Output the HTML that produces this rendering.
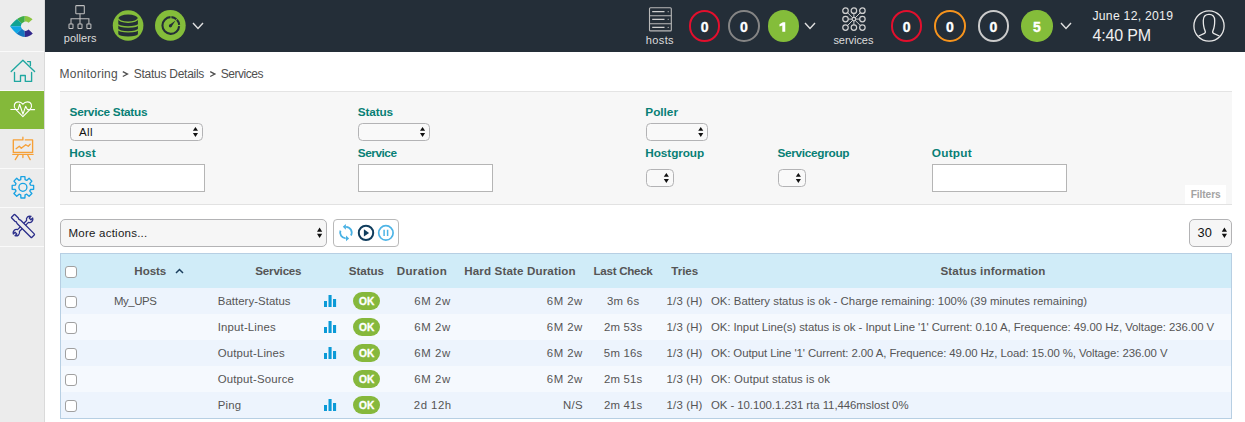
<!DOCTYPE html>
<html><head><meta charset="utf-8">
<style>
*{box-sizing:border-box;margin:0;padding:0}
html,body{width:1245px;height:422px;overflow:hidden;background:#fff;font-family:"Liberation Sans",sans-serif;}
.a{position:absolute;white-space:nowrap;line-height:1}
#side{position:absolute;left:0;top:0;width:45px;height:422px;background:#ececec;border-right:1px solid #dadada}
.sep{position:absolute;left:0;width:44px;height:1px;background:#fafafa}
#hdr{position:absolute;left:45px;top:0;width:1200px;height:52px;background:#242e38}
.ring{position:absolute;top:10.2px;width:31.6px;height:31.6px;border-radius:50%;border:2px solid #e30f2d;color:#fff;font-weight:bold;font-size:14px;-webkit-text-stroke:0.35px #fff;text-align:center;line-height:30px}
.fill{border:none;background:#84bd3a;line-height:34px}
.sel{position:absolute;border:1px solid #b3b3b5;border-radius:4.5px;background:#f9f9f9}
.inp{position:absolute;border:1px solid #b5b5b5;background:#fff;height:28px;width:135px}
.cb{position:absolute;width:12px;height:12px;border:1px solid #a0a0a0;border-radius:3px;background:#fff}
.ok{position:absolute;width:27px;height:18px;border-radius:9px;background:#86b83c}
.ok svg{position:absolute;left:0;top:0}
</style></head><body>

<!-- SIDEBAR -->
<div id="side">
  <svg class="a" style="left:0;top:0" width="44" height="52" viewBox="0 0 44 52">
    <defs><clipPath id="lc"><path d="M10,26.2 C14,21 19,16 25,15.9 C28,15.9 30.5,17.2 32.6,19.2 L28.6,22.8 A4.5,4.5 0 1 0 28.6,29.6 L32.8,33.5 C30.5,35.6 28,36.9 25,36.9 C19,36.9 14,31.8 10,26.2 Z"/></clipPath></defs>
    <g clip-path="url(#lc)">
      <polygon points="24.5,26.2 25,0 44,0 44,15" fill="#8cc540"/>
      <polygon points="24.5,26.2 25,0 0,0 12,14" fill="#3fad48"/>
      <polygon points="24.5,26.2 12,14 0,0 0,26.2" fill="#10a393"/>
      <polygon points="24.5,26.2 0,26.2 0,52 12,38" fill="#0ea6e4"/>
      <polygon points="24.5,26.2 12,38 0,52 25.5,52" fill="#1475bf"/>
      <polygon points="24.5,26.2 25.5,52 44,52 44,37" fill="#33298c"/>
    </g>
  </svg>
  <div class="sep" style="top:51px"></div>
  <div class="sep" style="top:90px"></div>
  <div class="a" style="left:0;top:91px;width:44px;height:38px;background:#84b93a"></div>
  <div class="sep" style="top:168px"></div>
  <div class="sep" style="top:207px"></div>
  <div class="sep" style="top:246px"></div>
  <svg class="a" style="left:0;top:0" width="44" height="260" viewBox="0 0 44 260" fill="none" stroke-linecap="round" stroke-linejoin="round">
  <g stroke="#1fa7a0" stroke-width="1.35">
    <path d="M11.2,71.5 L22.9,60.2 L34.6,71.5"/>
    <path d="M27.6,61.6 H30.4 V65.6"/>
    <path d="M14.5,72.5 V81.4 H20.5 V75.5 H25.3 V81.4 H31.6 V72.5"/>
  </g>
  <g stroke="#fff" stroke-width="1.1">
    <path d="M22.9,116.6 L15.7,109.4 C12.9,106.4 14.3,101.9 18.3,101.9 C20.5,101.9 22,103 22.9,104.3 C23.8,103 25.3,101.9 27.5,101.9 C31.5,101.9 32.9,106.4 30.1,109.4 Z"/>
    <path d="M10.8,109.5 H18.1 L19.6,104.2 L23,114.2 L25.6,106.3 L27.4,109.6 H34.6"/>
  </g>
  <g stroke="#f6a037" stroke-width="1.35">
    <path d="M22.9,137.2 V139.9 H21.3 M21.3,139.9 H13.3 V152.4 H32.6 V139.9 H25.3"/>
    <path d="M16.1,148.7 L19.3,146.3 L21.3,148.3 L25.7,144.7 L28.2,146.3 L30.2,144.3"/>
    <path d="M12.8,154.4 H33"/>
    <path d="M18.1,155.2 L15.3,159.6 M27.8,155.2 L30.2,159.6 M22.9,155.2 V157.6"/>
  </g>
  <g stroke="#1aa3e3" stroke-width="1.35">
    <path d="M20.72,179.71 L20.91,176.58 L24.89,176.58 L25.08,179.71 L26.73,180.39 L29.07,178.32 L31.88,181.13 L29.81,183.47 L30.49,185.12 L33.62,185.31 L33.62,189.29 L30.49,189.48 L29.81,191.13 L31.88,193.47 L29.07,196.28 L26.73,194.21 L25.08,194.89 L24.89,198.02 L20.91,198.02 L20.72,194.89 L19.07,194.21 L16.73,196.28 L13.92,193.47 L15.99,191.13 L15.31,189.48 L12.18,189.29 L12.18,185.31 L15.31,185.12 L15.99,183.47 L13.92,181.13 L16.73,178.32 L19.07,180.39 Z"/>
    <circle cx="22.9" cy="187.3" r="4"/>
  </g>
  <g stroke="#2b2e8a" stroke-width="1.3" transform="translate(23,226) rotate(45)">
    <path d="M1.3,-6.4 A3.4,3.4 0 0 0 1.2,-12.5 L1.2,-10 L-1.2,-10 L-1.2,-12.5 A3.4,3.4 0 0 0 -1.3,-6.4 V6.4 A3.4,3.4 0 0 0 -1.2,12.5 L-1.2,10 L1.2,10 L1.2,12.5 A3.4,3.4 0 0 0 1.3,6.4 Z"/>
    <path d="M-14.3,-1.9 Q-14.3,-2.4 -13.6,-2.4 L-9,-2.4 L-7.5,-1.8 L-6,-2.4 H13.5 Q14.3,-2.4 14.3,-1.6 V1.6 Q14.3,2.4 13.5,2.4 H-6 L-7.5,1.8 L-9,2.4 H-13.6 Q-14.3,2.4 -14.3,1.9 Z" fill="#ececec"/>
  </g>
</svg>
</div>

<!-- HEADER -->
<div id="hdr"></div>
<svg class="a" style="left:66px;top:4px" width="28" height="28" viewBox="0 0 28 28" fill="none" stroke="#bfbfbf" stroke-width="1.05">
  <rect x="9.8" y="1.6" width="8.5" height="8.2" rx="0.6"/>
  <path d="M14,9.8 V19.9 M5,19.9 V14.75 H22.9 V19.9"/>
  <rect x="3" y="20" width="4" height="4.4" rx="0.5"/><rect x="12" y="20" width="4" height="4.4" rx="0.5"/><rect x="20.9" y="20" width="4" height="4.4" rx="0.5"/>
</svg>
<svg class="a" style="left:112px;top:10px" width="32" height="32" viewBox="0 0 32 32">
  <circle cx="16.1" cy="15.5" r="15.3" fill="#84bd3a"/>
  <path d="M6.3,8.4 A9.8,3.9 0 0 1 25.9,8.4 V24 A9.8,2.6 0 0 1 6.3,24 Z" fill="#242e38"/>
  <g fill="none" stroke="#84bd3a" stroke-width="1.4">
    <path d="M6.3,8.4 A9.8,3.8 0 0 0 25.9,8.4"/>
    <path d="M6.3,14.4 A9.8,2.6 0 0 0 25.9,14.4"/>
    <path d="M6.3,19.3 A9.8,2.6 0 0 0 25.9,19.3"/>
  </g>
</svg>
<svg class="a" style="left:154px;top:10px" width="32" height="32" viewBox="0 0 32 32">
  <circle cx="16.35" cy="15.45" r="15.35" fill="#84bd3a"/>
  <g fill="none" stroke="#242e38" stroke-width="2.1">
    <path d="M25.13,16.08 A8.35,8.35 0 1 1 16.51,7.16"/>
    <path d="M17.38,7.17 A8.35,8.35 0 0 1 22.39,9.3"/>
    <path d="M22.91,9.81 A8.35,8.35 0 0 1 25.13,14.92"/>
  </g>
  <path d="M17.32,16.95 L21.5,10.4 L15.28,15.05 Z" fill="#242e38"/>
  <circle cx="16.3" cy="16" r="1.45" fill="#242e38"/>
</svg>
<svg class="a" style="left:192px;top:22px" width="12" height="8" viewBox="0 0 12 8" fill="none" stroke="#e0e0e0" stroke-width="1.4"><path d="M1,1 L6,6.5 L11,1"/></svg>

<svg class="a" style="left:648px;top:6px" width="26" height="27" viewBox="0 0 26 27" fill="none" stroke="#b9b9b9" stroke-width="1.1">
  <rect x="1.5" y="1.7" width="21.8" height="23.2" rx="1"/><path d="M1.5,9.7 H23.3 M1.5,17.8 H23.3"/>
  <path d="M4.2,5.7 H16.5 M4.2,13.3 H16.5 M4.2,21.4 H16.5" stroke="#cfcfcf" stroke-width="1.2"/>
  <circle cx="20.2" cy="5.7" r="0.6" fill="#bbb" stroke="none"/><circle cx="20.2" cy="13.3" r="0.6" fill="#bbb" stroke="none"/><circle cx="20.2" cy="21.4" r="0.6" fill="#bbb" stroke="none"/>
</svg>
<div class="ring" style="left:688.8px">0</div>
<div class="ring" style="left:728px;border-color:#858585">0</div>
<div class="ring fill" style="left:767.6px"></div>
<svg class="a" style="left:775px;top:18px" width="16" height="16" viewBox="0 0 16 16"><path d="M10.25,4.2 V13.65 H7.3 V7.5 L4.5,8.45 V6.15 L7.85,4.2 Z" fill="#fff"/></svg>
<svg class="a" style="left:804px;top:22px" width="12" height="8" viewBox="0 0 12 8" fill="none" stroke="#e0e0e0" stroke-width="1.4"><path d="M1,1 L6,6.5 L11,1"/></svg>

<svg class="a" style="left:840px;top:6px" width="28" height="28" viewBox="0 0 28 28" fill="none" stroke="#d0d0d0" stroke-width="1.2">
  <circle cx="5.5" cy="4.65" r="2.75"/><circle cx="13.9" cy="4.65" r="2.75"/><circle cx="22.4" cy="4.65" r="2.75"/><circle cx="5.5" cy="13.1" r="2.75"/><circle cx="13.9" cy="13.1" r="1.8"/><circle cx="22.4" cy="13.1" r="2.75"/><circle cx="5.5" cy="21.6" r="2.75"/><circle cx="13.9" cy="21.6" r="2.75"/><circle cx="22.4" cy="21.6" r="2.75"/>
  <path d="M12.63,11.82 L7.44,6.60 M13.90,11.30 L13.90,7.40 M15.18,11.83 L20.45,6.59 M12.10,13.10 L8.25,13.10 M15.70,13.10 L19.65,13.10 M12.63,14.38 L7.43,19.64 M13.90,14.90 L13.90,18.85 M15.17,14.37 L20.46,19.66" stroke-width="1"/>
</svg>
<div class="ring" style="left:890.8px">0</div>
<div class="ring" style="left:934.2px;border-color:#f7941d">0</div>
<div class="ring" style="left:977.5px;border-color:#cbcbcb">0</div>
<div class="ring fill" style="left:1021px">5</div>
<svg class="a" style="left:1060px;top:22px" width="12" height="8" viewBox="0 0 12 8" fill="none" stroke="#e0e0e0" stroke-width="1.4"><path d="M1,1 L6,6.5 L11,1"/></svg>

<svg class="a" style="left:1192px;top:9px" width="34" height="34" viewBox="0 0 34 34" fill="none" stroke="#e8e8e8" stroke-width="1.3">
  <circle cx="17" cy="17" r="15.1"/>
  <path d="M6.6,27 L12.5,24.4 C13.4,24 13.5,22.8 13,21.6 C12,19.5 11.3,16.5 11.3,11.5 C11.3,7.3 13.6,5.3 17,5.3 C20.4,5.3 22.7,7.3 22.7,11.5 C22.7,16.5 22,19.5 21,21.6 C20.5,22.8 20.6,24 21.5,24.4 L27.4,27"/>
</svg>

<svg class="a" style="left:0;top:60px" width="240" height="24" fill="none" stroke="#4f4f4f" stroke-width="1.3">
  <path d="M122.8,11.6 L127.5,14.05 L122.8,16.5 M210.2,11.6 L214.9,14.05 L210.2,16.5"/>
</svg>
<!-- FILTERS -->
<div class="a" style="left:60px;top:91px;width:1172px;height:114px;background:#f7f7f7;border-top:1px solid #e4e4e4;border-bottom:1px solid #e2e2e2"></div>
<div class="a" style="left:1185px;top:185px;width:41px;height:19px;background:#fff"></div>

<div class="sel" style="left:70px;top:123px;width:133px;height:18px"></div>
<div class="inp" style="left:70px;top:164px"></div>
<div class="sel" style="left:358px;top:123px;width:72px;height:18px"></div>
<div class="inp" style="left:358px;top:164px"></div>
<div class="sel" style="left:646px;top:123px;width:62px;height:18px"></div>
<div class="sel" style="left:646px;top:169px;width:28px;height:18px"></div>
<div class="sel" style="left:778px;top:169px;width:28px;height:18px"></div>
<div class="inp" style="left:932px;top:164px"></div>

<!-- ACTIONS -->
<div class="sel" style="left:60px;top:219px;width:267px;height:28px;background:#f6f6f6;border-radius:5px"></div>
<div class="a" style="left:333px;top:219px;width:66px;height:28px;border:1px solid #b9b9b9;border-radius:4px;background:#fff"></div>
<svg class="a" style="left:333px;top:219px" width="66" height="28" viewBox="0 0 66 28">
  <g fill="none" stroke="#48b1e4" stroke-width="1.8">
    <path d="M17.92,16.50 A5.8,5.8 0 0 0 13.10,7.80"/>
    <path d="M7.45,11.62 A5.8,5.8 0 0 0 12.70,19.40"/>
  </g>
  <path d="M9.8,7.8 L12.9,4.9 L12.9,10.7 Z" fill="#48b1e4"/>
  <path d="M16.1,19.4 L13,16.5 L13,22.3 Z" fill="#48b1e4"/>
  <circle cx="33" cy="13.9" r="7.2" fill="none" stroke="#103d5d" stroke-width="2"/>
  <path d="M30.9,10.3 L36.1,13.9 L30.9,17.5 Z" fill="#103d5d"/>
  <circle cx="52.9" cy="13.9" r="7.2" fill="none" stroke="#4db4e6" stroke-width="1.7"/>
  <path d="M51.1,10.7 V17.1 M54.6,10.7 V17.1" stroke="#4db4e6" stroke-width="1.5"/>
</svg>
<div class="sel" style="left:1189px;top:219px;width:43px;height:28px;background:#f6f6f6;border-radius:5px"></div>

<!-- select arrows -->
<svg class="a" style="left:0;top:0" width="1245" height="260" fill="#111">
  <g transform="translate(192.9,127)"><path d="M0,3.8 L2.55,0 L5.1,3.8 Z M0,6 L5.1,6 L2.55,10 Z"/></g>
  <g transform="translate(420,127)"><path d="M0,3.8 L2.55,0 L5.1,3.8 Z M0,6 L5.1,6 L2.55,10 Z"/></g>
  <g transform="translate(698.2,127)"><path d="M0,3.8 L2.55,0 L5.1,3.8 Z M0,6 L5.1,6 L2.55,10 Z"/></g>
  <g transform="translate(663.8,173)"><path d="M0,3.8 L2.55,0 L5.1,3.8 Z M0,6 L5.1,6 L2.55,10 Z"/></g>
  <g transform="translate(795.8,173)"><path d="M0,3.8 L2.55,0 L5.1,3.8 Z M0,6 L5.1,6 L2.55,10 Z"/></g>
  <g transform="translate(317,227.6)"><path d="M0,4.2 L2.6,0 L5.2,4.2 Z M0,6.2 L5.2,6.2 L2.6,10.4 Z"/></g>
  <g transform="translate(1221.8,227.6)"><path d="M0,4.2 L2.6,0 L5.2,4.2 Z M0,6.2 L5.2,6.2 L2.6,10.4 Z"/></g>
</svg>

<!-- TABLE -->
<div class="a" style="left:60px;top:253px;width:1172px;height:166px;border:1px solid #b7cfe3;background:#f5f9fe"></div>
<div class="a" style="left:61px;top:254px;width:1170px;height:34px;background:#d0ecf8"></div>
<div class="a" style="left:61px;top:288px;width:1170px;height:26px;background:#edf4fd"></div>
<div class="cb" style="left:65px;top:296px"></div>
<svg class="a" style="left:324px;top:295px" width="13" height="12" viewBox="0 0 13 12" fill="#0b9ad7"><rect x="0" y="6" width="3" height="6"/><rect x="4.5" y="0" width="3.1" height="12"/><rect x="9" y="4" width="3.1" height="8"/></svg>
<div class="ok" style="left:353px;top:292px"><svg width="27" height="18"><text x="13.6" y="13" text-anchor="middle" fill="#fff" font-family="Liberation Sans" font-weight="bold" font-size="10.2" stroke="#fff" stroke-width="0.35">OK</text></svg></div>
<div class="a" style="left:61px;top:314px;width:1170px;height:26px;background:#f5f9fe"></div>
<div class="cb" style="left:65px;top:322px"></div>
<svg class="a" style="left:324px;top:321px" width="13" height="12" viewBox="0 0 13 12" fill="#0b9ad7"><rect x="0" y="6" width="3" height="6"/><rect x="4.5" y="0" width="3.1" height="12"/><rect x="9" y="4" width="3.1" height="8"/></svg>
<div class="ok" style="left:353px;top:318px"><svg width="27" height="18"><text x="13.6" y="13" text-anchor="middle" fill="#fff" font-family="Liberation Sans" font-weight="bold" font-size="10.2" stroke="#fff" stroke-width="0.35">OK</text></svg></div>
<div class="a" style="left:61px;top:340px;width:1170px;height:26px;background:#edf4fd"></div>
<div class="cb" style="left:65px;top:348px"></div>
<svg class="a" style="left:324px;top:347px" width="13" height="12" viewBox="0 0 13 12" fill="#0b9ad7"><rect x="0" y="6" width="3" height="6"/><rect x="4.5" y="0" width="3.1" height="12"/><rect x="9" y="4" width="3.1" height="8"/></svg>
<div class="ok" style="left:353px;top:344px"><svg width="27" height="18"><text x="13.6" y="13" text-anchor="middle" fill="#fff" font-family="Liberation Sans" font-weight="bold" font-size="10.2" stroke="#fff" stroke-width="0.35">OK</text></svg></div>
<div class="a" style="left:61px;top:366px;width:1170px;height:26px;background:#f5f9fe"></div>
<div class="cb" style="left:65px;top:374px"></div>
<div class="ok" style="left:353px;top:370px"><svg width="27" height="18"><text x="13.6" y="13" text-anchor="middle" fill="#fff" font-family="Liberation Sans" font-weight="bold" font-size="10.2" stroke="#fff" stroke-width="0.35">OK</text></svg></div>
<div class="a" style="left:61px;top:392px;width:1170px;height:26px;background:#edf4fd"></div>
<div class="cb" style="left:65px;top:400px"></div>
<svg class="a" style="left:324px;top:399px" width="13" height="12" viewBox="0 0 13 12" fill="#0b9ad7"><rect x="0" y="6" width="3" height="6"/><rect x="4.5" y="0" width="3.1" height="12"/><rect x="9" y="4" width="3.1" height="8"/></svg>
<div class="ok" style="left:353px;top:396px"><svg width="27" height="18"><text x="13.6" y="13" text-anchor="middle" fill="#fff" font-family="Liberation Sans" font-weight="bold" font-size="10.2" stroke="#fff" stroke-width="0.35">OK</text></svg></div>
<div class="cb" style="left:65px;top:266px"></div>
<svg class="a" style="left:175px;top:268px" width="9" height="6" viewBox="0 0 9 6" fill="none" stroke="#1b3f5e" stroke-width="1.5"><path d="M1,5 L4.5,1.5 L8,5"/></svg>

<div class="a" style="left:63.76px;top:33px;font-size:11px;font-weight:400;color:#dcdcdc;letter-spacing:0.053px">pollers</div>
<div class="a" style="left:645.83px;top:35px;font-size:11px;font-weight:400;color:#dcdcdc;letter-spacing:0.368px">hosts</div>
<div class="a" style="left:833.41px;top:35px;font-size:11px;font-weight:400;color:#dcdcdc;letter-spacing:-0.045px">services</div>
<div class="a" style="left:1092.43px;top:10px;font-size:12.2px;font-weight:400;color:#f0f0f0;letter-spacing:0.271px">June 12, 2019</div>
<div class="a" style="left:1092.48px;top:28px;font-size:16px;font-weight:400;color:#f0f0f0;letter-spacing:-0.145px">4:40 PM</div>
<div class="a" style="left:59.58px;top:68px;font-size:12px;font-weight:400;color:#4f4f4f;letter-spacing:0.220px">Monitoring</div>
<div class="a" style="left:133.74px;top:68px;font-size:12px;font-weight:400;color:#4f4f4f;letter-spacing:-0.262px">Status Details</div>
<div class="a" style="left:220.84px;top:68px;font-size:12px;font-weight:400;color:#4f4f4f;letter-spacing:-0.473px">Services</div>
<div class="a" style="left:69.62px;top:107px;font-size:11.8px;font-weight:700;color:#087f75;letter-spacing:-0.262px">Service Status</div>
<div class="a" style="left:69.15px;top:148px;font-size:11.8px;font-weight:700;color:#087f75;letter-spacing:0.112px">Host</div>
<div class="a" style="left:357.72px;top:107px;font-size:11.8px;font-weight:700;color:#087f75;letter-spacing:-0.121px">Status</div>
<div class="a" style="left:357.72px;top:148px;font-size:11.8px;font-weight:700;color:#087f75;letter-spacing:-0.444px">Service</div>
<div class="a" style="left:645.35px;top:107px;font-size:11.8px;font-weight:700;color:#087f75;letter-spacing:-0.026px">Poller</div>
<div class="a" style="left:645.35px;top:148px;font-size:11.8px;font-weight:700;color:#087f75;letter-spacing:-0.102px">Hostgroup</div>
<div class="a" style="left:777.52px;top:148px;font-size:11.8px;font-weight:700;color:#087f75;letter-spacing:-0.310px">Servicegroup</div>
<div class="a" style="left:931.86px;top:148px;font-size:11.8px;font-weight:700;color:#087f75;letter-spacing:0.219px">Output</div>
<div class="a" style="left:1190.77px;top:190px;font-size:10.2px;font-weight:700;color:#a3a3a3;letter-spacing:-0.114px">Filters</div>
<div class="a" style="left:78.88px;top:127px;font-size:11.5px;font-weight:400;color:#111;letter-spacing:0.392px">All</div>
<div class="a" style="left:68.49px;top:228px;font-size:11.5px;font-weight:400;color:#1a1a1a;letter-spacing:0.238px">More actions...</div>
<div class="a" style="left:1197.44px;top:227px;font-size:12.8px;font-weight:400;color:#111;letter-spacing:0.250px">30</div>
<div class="a" style="left:134.36px;top:265px;font-size:11.6px;font-weight:700;color:#555555;letter-spacing:-0.091px">Hosts</div>
<div class="a" style="left:255.33px;top:265px;font-size:11.6px;font-weight:700;color:#555555;letter-spacing:-0.212px">Services</div>
<div class="a" style="left:348.83px;top:265px;font-size:11.6px;font-weight:700;color:#555555;letter-spacing:-0.039px">Status</div>
<div class="a" style="left:396.66px;top:265px;font-size:11.6px;font-weight:700;color:#555555;letter-spacing:0.354px">Duration</div>
<div class="a" style="left:464.16px;top:265px;font-size:11.6px;font-weight:700;color:#555555;letter-spacing:0.143px">Hard State Duration</div>
<div class="a" style="left:593.56px;top:265px;font-size:11.6px;font-weight:700;color:#555555;letter-spacing:-0.295px">Last Check</div>
<div class="a" style="left:671.28px;top:265px;font-size:11.6px;font-weight:700;color:#555555;letter-spacing:-0.041px">Tries</div>
<div class="a" style="left:940.43px;top:265px;font-size:11.6px;font-weight:700;color:#555555;letter-spacing:0.147px">Status information</div>
<div class="a" style="left:113.89px;top:296px;font-size:11.4px;color:#555555;letter-spacing:-0.404px">My_UPS</div>
<div class="a" style="left:217.81px;top:296px;font-size:11.4px;color:#555555;letter-spacing:0.046px">Battery-Status</div>
<div class="a" style="left:414.37px;top:296px;font-size:11.4px;color:#555555;letter-spacing:0.550px">6M 2w</div>
<div class="a" style="left:546.87px;top:296px;font-size:11.4px;color:#555555;letter-spacing:0.475px">6M 2w</div>
<div class="a" style="left:606.88px;top:296px;font-size:11.4px;color:#555555;letter-spacing:0.300px">3m 6s</div>
<div class="a" style="left:666.59px;top:296px;font-size:11.4px;color:#555555;letter-spacing:0.159px">1/3 (H)</div>
<div class="a" style="left:710.93px;top:296px;font-size:11.4px;color:#555555;letter-spacing:0.020px">OK: Battery status is ok - Charge remaining: 100% (39 minutes remaining)</div>
<div class="a" style="left:217.65px;top:322px;font-size:11.4px;color:#555555;letter-spacing:0.181px">Input-Lines</div>
<div class="a" style="left:414.37px;top:322px;font-size:11.4px;color:#555555;letter-spacing:0.550px">6M 2w</div>
<div class="a" style="left:546.87px;top:322px;font-size:11.4px;color:#555555;letter-spacing:0.475px">6M 2w</div>
<div class="a" style="left:603.96px;top:322px;font-size:11.4px;color:#555555;letter-spacing:0.181px">2m 53s</div>
<div class="a" style="left:666.59px;top:322px;font-size:11.4px;color:#555555;letter-spacing:0.159px">1/3 (H)</div>
<div class="a" style="left:710.93px;top:322px;font-size:11.4px;color:#555555;letter-spacing:-0.056px">OK: Input Line(s) status is ok - Input Line '1' Current: 0.10 A, Frequence: 49.00 Hz, Voltage: 236.00 V</div>
<div class="a" style="left:217.73px;top:348px;font-size:11.4px;color:#555555;letter-spacing:0.171px">Output-Lines</div>
<div class="a" style="left:414.37px;top:348px;font-size:11.4px;color:#555555;letter-spacing:0.550px">6M 2w</div>
<div class="a" style="left:546.87px;top:348px;font-size:11.4px;color:#555555;letter-spacing:0.475px">6M 2w</div>
<div class="a" style="left:603.86px;top:348px;font-size:11.4px;color:#555555;letter-spacing:0.200px">5m 16s</div>
<div class="a" style="left:666.59px;top:348px;font-size:11.4px;color:#555555;letter-spacing:0.159px">1/3 (H)</div>
<div class="a" style="left:710.93px;top:348px;font-size:11.4px;color:#555555;letter-spacing:-0.084px">OK: Output Line '1' Current: 2.00 A, Frequence: 49.00 Hz, Load: 15.00 %, Voltage: 236.00 V</div>
<div class="a" style="left:217.73px;top:374px;font-size:11.4px;color:#555555;letter-spacing:0.172px">Output-Source</div>
<div class="a" style="left:414.37px;top:374px;font-size:11.4px;color:#555555;letter-spacing:0.550px">6M 2w</div>
<div class="a" style="left:546.87px;top:374px;font-size:11.4px;color:#555555;letter-spacing:0.475px">6M 2w</div>
<div class="a" style="left:603.96px;top:374px;font-size:11.4px;color:#555555;letter-spacing:0.181px">2m 51s</div>
<div class="a" style="left:666.59px;top:374px;font-size:11.4px;color:#555555;letter-spacing:0.159px">1/3 (H)</div>
<div class="a" style="left:710.93px;top:374px;font-size:11.4px;color:#555555;letter-spacing:0.083px">OK: Output status is ok</div>
<div class="a" style="left:217.81px;top:400px;font-size:11.4px;color:#555555;letter-spacing:0.139px">Ping</div>
<div class="a" style="left:413.86px;top:400px;font-size:11.4px;color:#555555;letter-spacing:0.476px">2d 12h</div>
<div class="a" style="left:563.09px;top:400px;font-size:11.4px;color:#555555;letter-spacing:0.253px">N/S</div>
<div class="a" style="left:603.96px;top:400px;font-size:11.4px;color:#555555;letter-spacing:0.181px">2m 41s</div>
<div class="a" style="left:666.59px;top:400px;font-size:11.4px;color:#555555;letter-spacing:0.159px">1/3 (H)</div>
<div class="a" style="left:710.93px;top:400px;font-size:11.4px;color:#555555;letter-spacing:-0.045px">OK - 10.100.1.231 rta 11,446mslost 0%</div>
</body></html>
